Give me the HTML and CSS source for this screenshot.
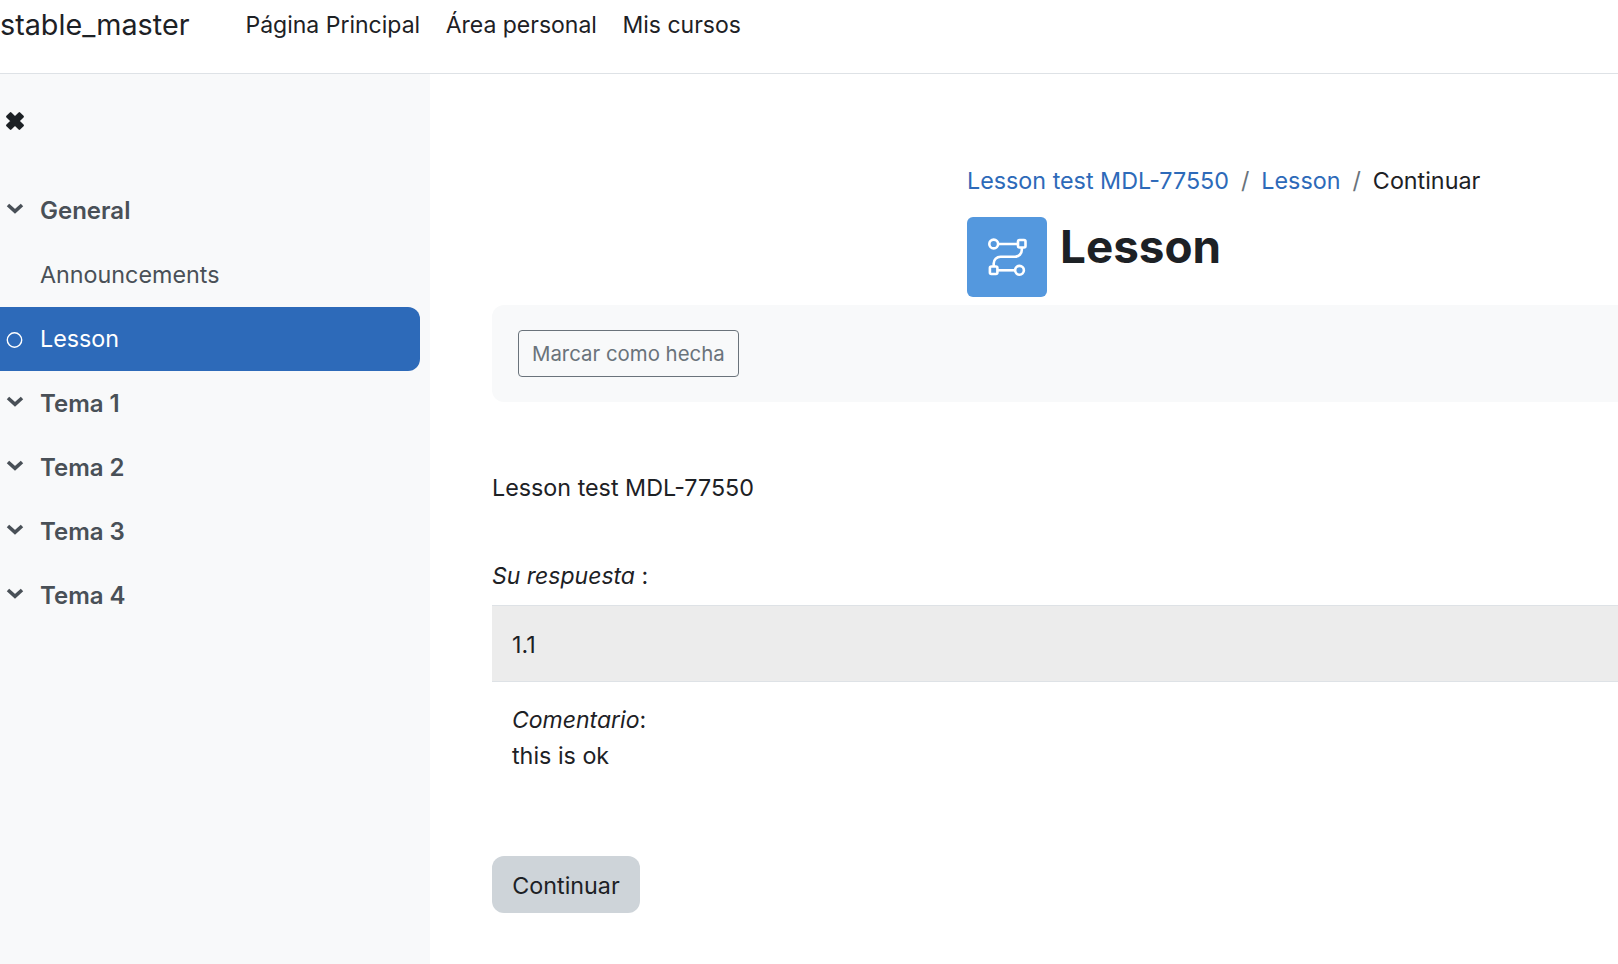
FILE: index.html
```html
<!DOCTYPE html>
<html lang="es">
<head>
<meta charset="utf-8">
<title>Lesson</title>
<link rel="stylesheet" href="styles.css">
</head>
<body>
<nav class="navbar">
  <a class="brand">stable_master</a>
  <ul class="nav-links">
    <li>Página Principal</li>
    <li>Área personal</li>
    <li>Mis cursos</li>
  </ul>
</nav>
<div class="layout">
  <aside class="sidebar">
    <div class="close-row">
      <svg class="icon-close" viewBox="1.6 1.6 14.8 14.8" width="18" height="18"><path d="M2.600 5.400 5.400 2.600 9 6.200l3.600-3.600 2.800 2.800L11.800 9l3.600 3.600-2.800 2.800L9 11.800l-3.600 3.600-2.800-2.800L6.200 9z" fill="#1d2125" stroke="#1d2125" stroke-width="1.800" stroke-linejoin="round"/></svg>
    </div>
    <ul class="course-index">
      <li class="ci-item section"><svg class="chev" viewBox="0 0 18 12" width="18" height="12"><path d="M2 2 9 8.400 16 2" fill="none" stroke="#495057" stroke-width="3.600"/></svg><span>General</span></li>
      <li class="ci-item"><span class="ci-spacer"></span><span>Announcements</span></li>
      <li class="ci-item active"><svg class="circle" viewBox="0 0 18 18" width="18" height="18"><circle cx="8.500" cy="9" r="7.200" fill="none" stroke="#fff" stroke-width="1.400"/></svg><span>Lesson</span></li>
      <li class="ci-item section"><svg class="chev" viewBox="0 0 18 12" width="18" height="12"><path d="M2 2 9 8.400 16 2" fill="none" stroke="#495057" stroke-width="3.600"/></svg><span>Tema 1</span></li>
      <li class="ci-item section"><svg class="chev" viewBox="0 0 18 12" width="18" height="12"><path d="M2 2 9 8.400 16 2" fill="none" stroke="#495057" stroke-width="3.600"/></svg><span>Tema 2</span></li>
      <li class="ci-item section"><svg class="chev" viewBox="0 0 18 12" width="18" height="12"><path d="M2 2 9 8.400 16 2" fill="none" stroke="#495057" stroke-width="3.600"/></svg><span>Tema 3</span></li>
      <li class="ci-item section"><svg class="chev" viewBox="0 0 18 12" width="18" height="12"><path d="M2 2 9 8.400 16 2" fill="none" stroke="#495057" stroke-width="3.600"/></svg><span>Tema 4</span></li>
    </ul>
  </aside>
  <main class="main">
    <header class="page-head">
      <ol class="breadcrumb">
        <li><a>Lesson test MDL-77550</a></li>
        <li class="sep">/</li>
        <li><a>Lesson</a></li>
        <li class="sep">/</li>
        <li>Continuar</li>
      </ol>
      <div class="title-row">
        <div class="mod-icon">
          <svg viewBox="0 0 40 40" width="40" height="40" fill="none" stroke="#fff" stroke-width="2.600"><circle cx="6.700" cy="7" r="4.400"/><rect x="31" y="3" width="7.500" height="7.500" rx="1.500"/><path d="M11.100 7H31M34.800 10.500v2.500c0 3.700-3 6.700-6.700 6.700H13.500c-3.700 0-6.800 3-6.800 6.700v2.600"/><rect x="2.900" y="29.500" width="7.500" height="7.500" rx="1.500"/><circle cx="32.500" cy="33.300" r="4.400"/><path d="M10.400 33.300h17.700"/></svg>
        </div>
        <h1>Lesson</h1>
      </div>
    </header>
    <div class="activity-bar">
      <button class="mark-done">Marcar como hecha</button>
    </div>
    <p class="lesson-name">Lesson test MDL-77550</p>
    <p class="answer-label"><em>Su respuesta</em> :</p>
    <div class="answer-box">1.1</div>
    <div class="feedback"><em>Comentario</em>:<br>this is ok</div>
    <button class="continue">Continuar</button>
  </main>
</div>
</body>
</html>
```
FILE: styles.css
```css
* { box-sizing: border-box; }
html, body { margin: 0; height: 100%; overflow: hidden; }
body {
  font-family: Inter, "Liberation Sans", sans-serif;
  font-size: 23.3px;
  line-height: 36px;
  color: #1d2125;
  background: #fff;
}
.navbar {
  height: 74px;
  display: flex;
  align-items: flex-start;
  border-bottom: 1px solid #dee2e6;
  background: #fff;
}
.brand { font-size: 28.75px; line-height: 50px; }
.nav-links {
  list-style: none;
  display: flex;
  gap: 25.5px;
  margin: 7px 0 0 56px;
  padding: 0;
  font-size: 23px;
}
.layout { display: flex; height: 890px; }
.sidebar { width: 430px; flex: none; background: #f8f9fa; }
.close-row { height: 105px; padding: 38px 0 0 6px; display: flex; align-items: flex-start; }
.course-index { list-style: none; margin: 0; padding: 0 10px 0 0; }
.ci-item {
  height: 64px;
  display: flex;
  align-items: center;
  padding-left: 6px;
  gap: 16px;
  color: #495057;
}
.ci-spacer { width: 18px; }
.section { font-size: 24px; font-weight: 600; }
.chev { margin-top: -4px; flex: none; }
.active { background: #2d6ab9; color: #fff; border-radius: 0 12px 12px 0; margin-bottom: 1px; }
.circle { flex: none; margin-top: 2px; }
.main { flex: 1; padding-left: 62px; min-width: 0; }
.page-head { padding: 89px 0 0 475px; height: 231px; }
.breadcrumb { list-style: none; display: flex; gap: 12px; margin: 0; padding: 0; height: 36px; }
.breadcrumb a { color: #2d6ab9; }
.sep { color: #6a737b; }
.title-row { display: flex; margin-top: 18px; gap: 13px; }
.mod-icon {
  width: 80px; height: 80px; background: #5498de; border-radius: 6px;
  display: flex; align-items: center; justify-content: center;
}
h1 { margin: 0; font-size: 45.8px; line-height: 60px; font-weight: 700; }
.activity-bar { background: #f8f9fa; border-radius: 12px 0 0 12px; height: 97px; padding: 25px 0 0 26px; }
.mark-done {
  font: inherit; font-size: 20.4px; line-height: 30px;
  color: #6a737b; background: transparent;
  border: 1px solid #6a737b; border-radius: 4px;
  height: 47px; padding: 0 13px;
}
em { font-size: 23px; }
.lesson-name { margin: 68px 0 0; }
.answer-label { margin: 52px 0 0; }
.answer-box {
  margin-top: 11px; height: 77px; background: #ececec;
  border-top: 1px solid #dee2e6; border-bottom: 1px solid #dee2e6;
  padding: 21px 0 0 20px;
}
.feedback { padding: 20px 0 0 20px; }
.continue {
  display: block; margin-top: 82px;
  font: inherit; color: #1d2125; background: #ced4d9;
  border: 0; border-radius: 12px; height: 57px; width: 148px;
  padding: 2px 0 0;
}
```
